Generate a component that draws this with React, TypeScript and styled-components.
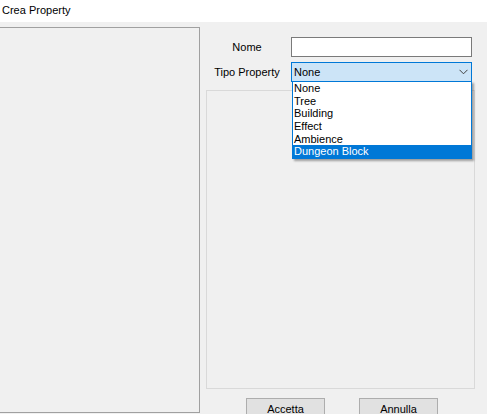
import React from 'react';
import styled, { createGlobalStyle } from 'styled-components';

const GlobalStyle = createGlobalStyle`
  html, body {
    margin: 0;
    padding: 0;
    background: #f0f0f0;
    font-family: "Liberation Sans", Arial, sans-serif;
    font-size: 11px;
    color: #000;
  }
`;

const Window = styled.div`
  width: 487px;
  height: 414px;
  overflow: hidden;
  background: #f0f0f0;
  display: flex;
  flex-direction: column;
`;

const TitleBar = styled.div`
  height: 22px;
  flex: none;
  background: #fff;
  padding-left: 2px;
  display: flex;
  align-items: center;
  font-size: 11px;
  padding-bottom: 2px;
  box-sizing: border-box;
`;

const Body = styled.div`
  flex: 1;
  display: flex;
  padding-top: 5px;
`;

const LeftPanel = styled.div`
  width: 200px;
  height: 386px;
  box-sizing: border-box;
  border: 1px solid #a0a0a0;
  border-left: none;
  background: #f0f0f0;
  flex: none;
`;

const RightPanel = styled.div`
  position: relative;
  padding: 10px 0 0 6px;
  display: flex;
  flex-direction: column;
`;

const Form = styled.div`
  display: grid;
  grid-template-columns: 82px 181px;
  column-gap: 3px;
  row-gap: 5px;
  align-items: center;
`;

const Label = styled.div`
  text-align: center;
  white-space: nowrap;
`;

const TextInput = styled.div`
  height: 20px;
  box-sizing: border-box;
  border: 1px solid #7a7a7a;
  background: #fff;
`;

const Combo = styled.div`
  position: relative;
  height: 20px;
  box-sizing: border-box;
  border: 1px solid #0078d7;
  background: #cce4f7;
  display: flex;
  align-items: center;
  padding-left: 2px;
`;

const Chevron = styled.svg`
  position: absolute;
  right: 3px;
  top: 6px;
`;

const DropList = styled.div`
  position: absolute;
  left: 0;
  right: -1px;
  top: 18px;
  box-sizing: border-box;
  border: 1px solid #0078d7;
  background: #fff;
  box-shadow: 2px 2px 2px rgba(0, 0, 0, 0.35);
  z-index: 10;
`;

const Item = styled.div<{ $selected?: boolean }>`
  height: 12.67px;
  line-height: 12.67px;
  padding-left: 1px;
  white-space: nowrap;
  background: ${({ $selected }) => ($selected ? '#0078d7' : 'transparent')};
  color: ${({ $selected }) => ($selected ? '#fff' : '#000')};
`;

const Preview = styled.div`
  margin-top: 8px;
  width: 269px;
  height: 299px;
  box-sizing: border-box;
  border: 1px solid #d9d9d9;
  background: #f0f0f0;
`;

const Buttons = styled.div`
  margin-top: 9px;
  width: 269px;
  display: flex;
  justify-content: center;
  gap: 34px;
  padding-left: 3px;
  box-sizing: border-box;
`;

const Button = styled.div`
  width: 79px;
  height: 21px;
  box-sizing: border-box;
  border: 1px solid #adadad;
  background: #e1e1e1;
  display: flex;
  align-items: center;
  justify-content: center;
`;

const options = ['None', 'Tree', 'Building', 'Effect', 'Ambience', 'Dungeon Block'];

export default function App() {
  return (
    <>
      <GlobalStyle />
      <Window>
        <TitleBar>Crea Property</TitleBar>
        <Body>
          <LeftPanel />
          <RightPanel>
            <Form>
              <Label>Nome</Label>
              <TextInput />
              <Label>Tipo Property</Label>
              <Combo>
                None
                <Chevron width="9" height="6" viewBox="0 0 9 6">
                  <path d="M0.5 0.8 L4.5 4.8 L8.5 0.8" fill="none" stroke="#404040" strokeWidth="1" />
                </Chevron>
                <DropList>
                  {options.map(o => (
                    <Item key={o} $selected={o === 'Dungeon Block'}>{o}</Item>
                  ))}
                </DropList>
              </Combo>
            </Form>
            <Preview />
            <Buttons>
              <Button>Accetta</Button>
              <Button>Annulla</Button>
            </Buttons>
          </RightPanel>
        </Body>
      </Window>
    </>
  );
}
